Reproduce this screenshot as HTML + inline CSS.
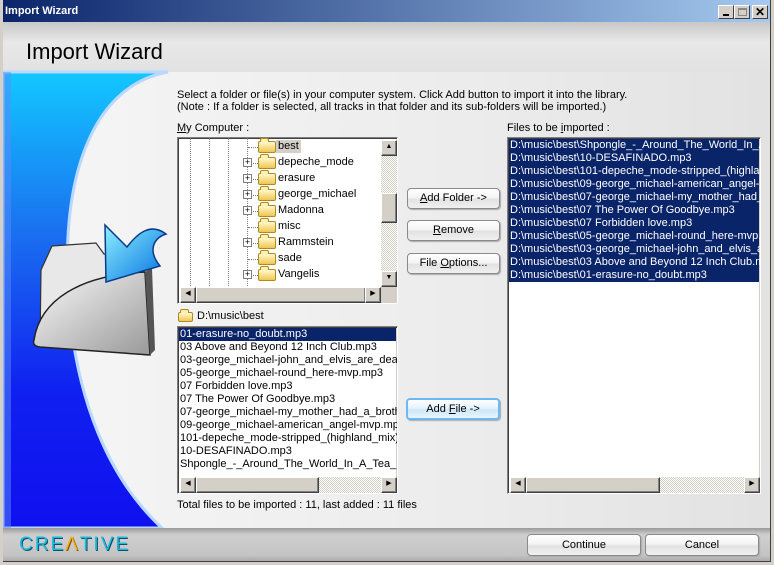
<!DOCTYPE html>
<html><head><meta charset="utf-8"><style>
*{margin:0;padding:0;box-sizing:border-box}
body{width:774px;height:565px;overflow:hidden;font-family:"Liberation Sans",sans-serif;font-size:11px;color:#000;background:#d4d0c8;position:relative}
.a{position:absolute}
.t{position:absolute;white-space:nowrap;line-height:13px}
.box{position:absolute;background:#fff;border:1px solid #808080;border-right-color:#fff;border-bottom-color:#fff;box-shadow:inset 1px 1px 0 #404040,inset -1px -1px 0 #d4d0c8;overflow:hidden}
.row{height:13px;line-height:13px;padding-left:1px;white-space:nowrap}
.sel{background:#0a246a;color:#fff}
.btn{position:absolute;border:1px solid #8a8a8a;border-radius:4px;background:linear-gradient(#fff 0%,#f4f4f4 45%,#e2e2e2 55%,#f0f0f0 100%);box-shadow:1px 1px 1px #aaa;text-align:center;line-height:18px;font-size:11px}
.sbtn{position:absolute;width:16px;height:16px;background:#d4d0c8;border:1px solid;border-color:#fff #404040 #404040 #fff;box-shadow:inset -1px -1px 0 #808080}
.track{position:absolute;background-color:#eee;background-image:repeating-conic-gradient(#d4d0c8 0 25%,#fff 0 50%);background-size:2px 2px}
.thumb{position:absolute;background:#d4d0c8;border:1px solid;border-color:#fff #404040 #404040 #fff;box-shadow:inset -1px -1px 0 #808080}
.fold{position:absolute;width:18px;height:12px;border:1px solid #b08a20;border-radius:2px;background:linear-gradient(#fff8d0,#f0c850)}
.fold:before{content:"";position:absolute;left:1px;top:-4px;width:7px;height:3px;border:1px solid #b08a20;border-bottom:none;border-radius:2px 2px 0 0;background:#fff0b0}
.plus{position:absolute;width:9px;height:9px;border:1px solid #808080;background:#fff;font-size:9px;line-height:7px;text-align:center;color:#000}
.dot{position:absolute;border-left:1px dotted #808080}
.hd{position:absolute;border-top:1px dotted #808080;width:10px}
</style></head><body>
<div class="a" style="left:0;top:0;width:774px;height:22px;background:linear-gradient(90deg,#0a246a,#a6caf0)"></div>
<div class="t" style="left:5px;top:5px;color:#fff;font-weight:bold;font-size:11px">Import Wizard</div>
<div class="a" style="left:718px;top:5px;width:16px;height:14px;background:#d4d0c8;border:1px solid;border-color:#fff #404040 #404040 #fff"><div class="a" style="left:4px;top:8px;width:6px;height:2px;background:#000"></div></div>
<div class="a" style="left:734px;top:5px;width:16px;height:14px;background:#d4d0c8;border:1px solid;border-color:#fff #404040 #404040 #fff"><div class="a" style="left:3px;top:2px;width:9px;height:8px;border:1px solid #888;border-top-width:2px"></div></div>
<div class="a" style="left:752px;top:5px;width:16px;height:14px;background:#d4d0c8;border:1px solid;border-color:#fff #404040 #404040 #fff;font-size:12px;font-weight:bold;line-height:12px;text-align:center">✕</div>
<div class="a" style="left:3px;top:22px;width:768px;height:50px;background:linear-gradient(#c8c8c8,#e8e8e8 40%,#e2e2e2)"></div>
<div class="t" style="left:26px;top:40px;font-size:22px;line-height:24px">Import Wizard</div>
<div class="a" style="left:3px;top:72px;width:768px;height:456px;background:linear-gradient(90deg,#f6f6f6,#ececec 60%,#e2e2e2)"></div>
<svg class="a" style="left:0;top:0" width="774" height="565">
<defs><linearGradient id="g" x1="0" y1="0" x2="0" y2="1"><stop offset="0" stop-color="#12c8ff"/><stop offset="0.35" stop-color="#1a70f0"/><stop offset="0.7" stop-color="#1020f0"/><stop offset="1" stop-color="#1010f0"/></linearGradient>
<linearGradient id="f" x1="0" y1="0" x2="1" y2="1"><stop offset="0" stop-color="#fafafa"/><stop offset="1" stop-color="#999"/></linearGradient>
<linearGradient id="ar" x1="0" y1="0" x2="1" y2="1"><stop offset="0" stop-color="#8ff0ff"/><stop offset="1" stop-color="#0070e0"/></linearGradient></defs>
<path d="M3,72 L168,72 C95,85 62,170 68,290 C74,400 110,480 162,528 L3,528 Z" fill="url(#g)" stroke="#b8d8ff" stroke-width="3"/>
<rect x="3" y="72" width="8" height="456" fill="#5a8cf8" opacity="0.5"/>
<path d="M41,270 L52,246 L96,243 L104,254 L148,258 L150,352 L148,355 L40,345 Z" fill="#e8e8e8" stroke="#333" stroke-width="1.2"/>
<path d="M34,340 C40,300 80,275 145,272 L150,355 L40,347 Q32,346 34,340 Z" fill="url(#f)" stroke="#222" stroke-width="1.5"/>
<path d="M145,272 L150,355 L155,350 L152,268 Z" fill="#555"/>
<path d="M105,225 L127,247 C137,234 150,222 166,234 C154,238 147,250 160,266 L106,282 Z" fill="url(#ar)" stroke="#0a3a8a" stroke-width="1.5"/>
</svg>
<div class="t" style="left:177px;top:89px">Select a folder or file(s) in your computer system. Click Add button to import it into the library.</div>
<div class="t" style="left:177px;top:101px">(Note : If a folder is selected, all tracks in that folder and its sub-folders will be imported.)</div>
<div class="t" style="left:177px;top:122px"><u>M</u>y Computer :</div>
<div class="t" style="left:507px;top:122px">Files to be <u>i</u>mported :</div>
<div class="box" style="left:177px;top:137px;width:221px;height:167px">
 <div class="dot" style="left:12px;top:0;height:150px"></div>
 <div class="dot" style="left:31px;top:0;height:150px"></div>
 <div class="dot" style="left:50px;top:0;height:150px"></div>
 <div class="dot" style="left:69px;top:0;height:150px"></div>
 <div class="t" style="left:98px;top:2px;background:#d4d0c8;padding:0 2px">best</div>
 <div class="t" style="left:100px;top:18px">depeche_mode</div>
 <div class="t" style="left:100px;top:34px">erasure</div>
 <div class="t" style="left:100px;top:50px">george_michael</div>
 <div class="t" style="left:100px;top:66px">Madonna</div>
 <div class="t" style="left:100px;top:82px">misc</div>
 <div class="t" style="left:100px;top:98px">Rammstein</div>
 <div class="t" style="left:100px;top:114px">sade</div>
 <div class="t" style="left:100px;top:130px">Vangelis</div>
 <div class="hd" style="left:70px;top:9px"></div>
 <div class="hd" style="left:70px;top:25px"></div><div class="plus" style="left:65px;top:20px">+</div>
 <div class="hd" style="left:70px;top:41px"></div><div class="plus" style="left:65px;top:36px">+</div>
 <div class="hd" style="left:70px;top:57px"></div><div class="plus" style="left:65px;top:52px">+</div>
 <div class="hd" style="left:70px;top:73px"></div><div class="plus" style="left:65px;top:68px">+</div>
 <div class="hd" style="left:70px;top:89px"></div>
 <div class="hd" style="left:70px;top:105px"></div><div class="plus" style="left:65px;top:100px">+</div>
 <div class="hd" style="left:70px;top:121px"></div>
 <div class="hd" style="left:70px;top:137px"></div><div class="plus" style="left:65px;top:132px">+</div>
 <div class="fold" style="left:80px;top:3px"></div><div class="fold" style="left:80px;top:19px"></div><div class="fold" style="left:80px;top:35px"></div><div class="fold" style="left:80px;top:51px"></div><div class="fold" style="left:80px;top:67px"></div><div class="fold" style="left:80px;top:83px"></div><div class="fold" style="left:80px;top:99px"></div><div class="fold" style="left:80px;top:115px"></div><div class="fold" style="left:80px;top:131px"></div>
 <div class="track" style="left:203px;top:2px;width:16px;height:148px"></div>
 <div class="sbtn" style="left:203px;top:2px;font-size:7px;text-align:center;line-height:12px">▲</div>
 <div class="thumb" style="left:203px;top:55px;width:16px;height:30px"></div>
 <div class="sbtn" style="left:203px;top:133px;font-size:7px;text-align:center;line-height:12px">▼</div>
 <div class="a" style="left:2px;top:149px;width:217px;height:16px;background:#d4d0c8"></div>
 <div class="sbtn" style="left:2px;top:149px;font-size:7px;text-align:center;line-height:12px">◀</div>
 <div class="thumb" style="left:18px;top:149px;width:170px;height:16px"></div>
 <div class="sbtn" style="left:187px;top:149px;font-size:7px;text-align:center;line-height:12px">▶</div>
</div>
<div class="fold" style="left:178px;top:312px;width:15px;height:10px"></div>
<div class="t" style="left:197px;top:310px">D:\music\best</div>
<div class="box" style="left:177px;top:326px;width:221px;height:168px;padding:1px 1px">
 <div class="row sel">01-erasure-no_doubt.mp3</div>
 <div class="row">03 Above and Beyond 12 Inch Club.mp3</div>
 <div class="row">03-george_michael-john_and_elvis_are_dead.mp3</div>
 <div class="row">05-george_michael-round_here-mvp.mp3</div>
 <div class="row">07 Forbidden love.mp3</div>
 <div class="row">07 The Power Of Goodbye.mp3</div>
 <div class="row">07-george_michael-my_mother_had_a_brother.mp3</div>
 <div class="row">09-george_michael-american_angel-mvp.mp3</div>
 <div class="row">101-depeche_mode-stripped_(highland_mix)-</div>
 <div class="row">10-DESAFINADO.mp3</div>
 <div class="row">Shpongle_-_Around_The_World_In_A_Tea_Daze</div>
 <div class="track" style="left:2px;top:150px;width:217px;height:16px"></div>
 <div class="sbtn" style="left:2px;top:150px;font-size:7px;text-align:center;line-height:12px">◀</div>
 <div class="thumb" style="left:18px;top:150px;width:123px;height:16px"></div>
 <div class="sbtn" style="left:203px;top:150px;font-size:7px;text-align:center;line-height:12px">▶</div>
</div>
<div class="t" style="left:177px;top:499px">Total files to be imported : 11, last added : 11 files</div>
<div class="btn" style="left:407px;top:188px;width:93px;height:21px"><u>A</u>dd Folder -&gt;</div>
<div class="btn" style="left:407px;top:220px;width:93px;height:21px"><u>R</u>emove</div>
<div class="btn" style="left:407px;top:253px;width:93px;height:21px">File <u>O</u>ptions...</div>
<div class="btn" style="left:406px;top:398px;width:94px;height:22px;border:2px solid #6cb8f0;background:linear-gradient(#fff,#e4f2fc 45%,#cde8fa 55%,#e8f4fc)">Add <u>F</u>ile -&gt;</div>
<div class="box" style="left:507px;top:137px;width:254px;height:357px;padding:1px 1px">
 <div style="background:#0a246a;color:#fff">
 <div class="row">D:\music\best\Shpongle_-_Around_The_World_In_A_Tea</div>
 <div class="row">D:\music\best\10-DESAFINADO.mp3</div>
 <div class="row">D:\music\best\101-depeche_mode-stripped_(highland_mix)</div>
 <div class="row">D:\music\best\09-george_michael-american_angel-mvp</div>
 <div class="row">D:\music\best\07-george_michael-my_mother_had_a_brother</div>
 <div class="row">D:\music\best\07 The Power Of Goodbye.mp3</div>
 <div class="row">D:\music\best\07 Forbidden love.mp3</div>
 <div class="row">D:\music\best\05-george_michael-round_here-mvp.mp3</div>
 <div class="row">D:\music\best\03-george_michael-john_and_elvis_are</div>
 <div class="row">D:\music\best\03 Above and Beyond 12 Inch Club.mp3</div>
 <div class="row">D:\music\best\01-erasure-no_doubt.mp3</div>
 </div>
 <div class="track" style="left:2px;top:339px;width:250px;height:16px"></div>
 <div class="sbtn" style="left:2px;top:339px;font-size:7px;text-align:center;line-height:12px">◀</div>
 <div class="thumb" style="left:18px;top:339px;width:134px;height:16px"></div>
 <div class="sbtn" style="left:236px;top:339px;font-size:7px;text-align:center;line-height:12px">▶</div>
</div>
<div class="a" style="left:3px;top:528px;width:768px;height:34px;background:linear-gradient(#9a9a9a,#cfcfcf 20%,#c4c4c4 80%,#a8a8a8)"></div>
<div class="t" style="left:19px;top:535px;font-size:19px;line-height:20px;color:#20b8d8;letter-spacing:2px;text-shadow:1px 1px 0 #0a5070">CRE<span style="color:#f0b020;text-shadow:1px 1px 0 #805010">Λ</span>TIVE</div>
<div class="btn" style="left:527px;top:534px;width:114px;height:22px;line-height:20px">Continue</div>
<div class="btn" style="left:645px;top:534px;width:114px;height:22px;line-height:20px">Cancel</div>
<div class="a" style="left:0;top:0;width:774px;height:565px;border:3px solid #d4d0c8;border-top:none;box-shadow:inset -1px -1px 0 #404040"></div>
</body></html>
